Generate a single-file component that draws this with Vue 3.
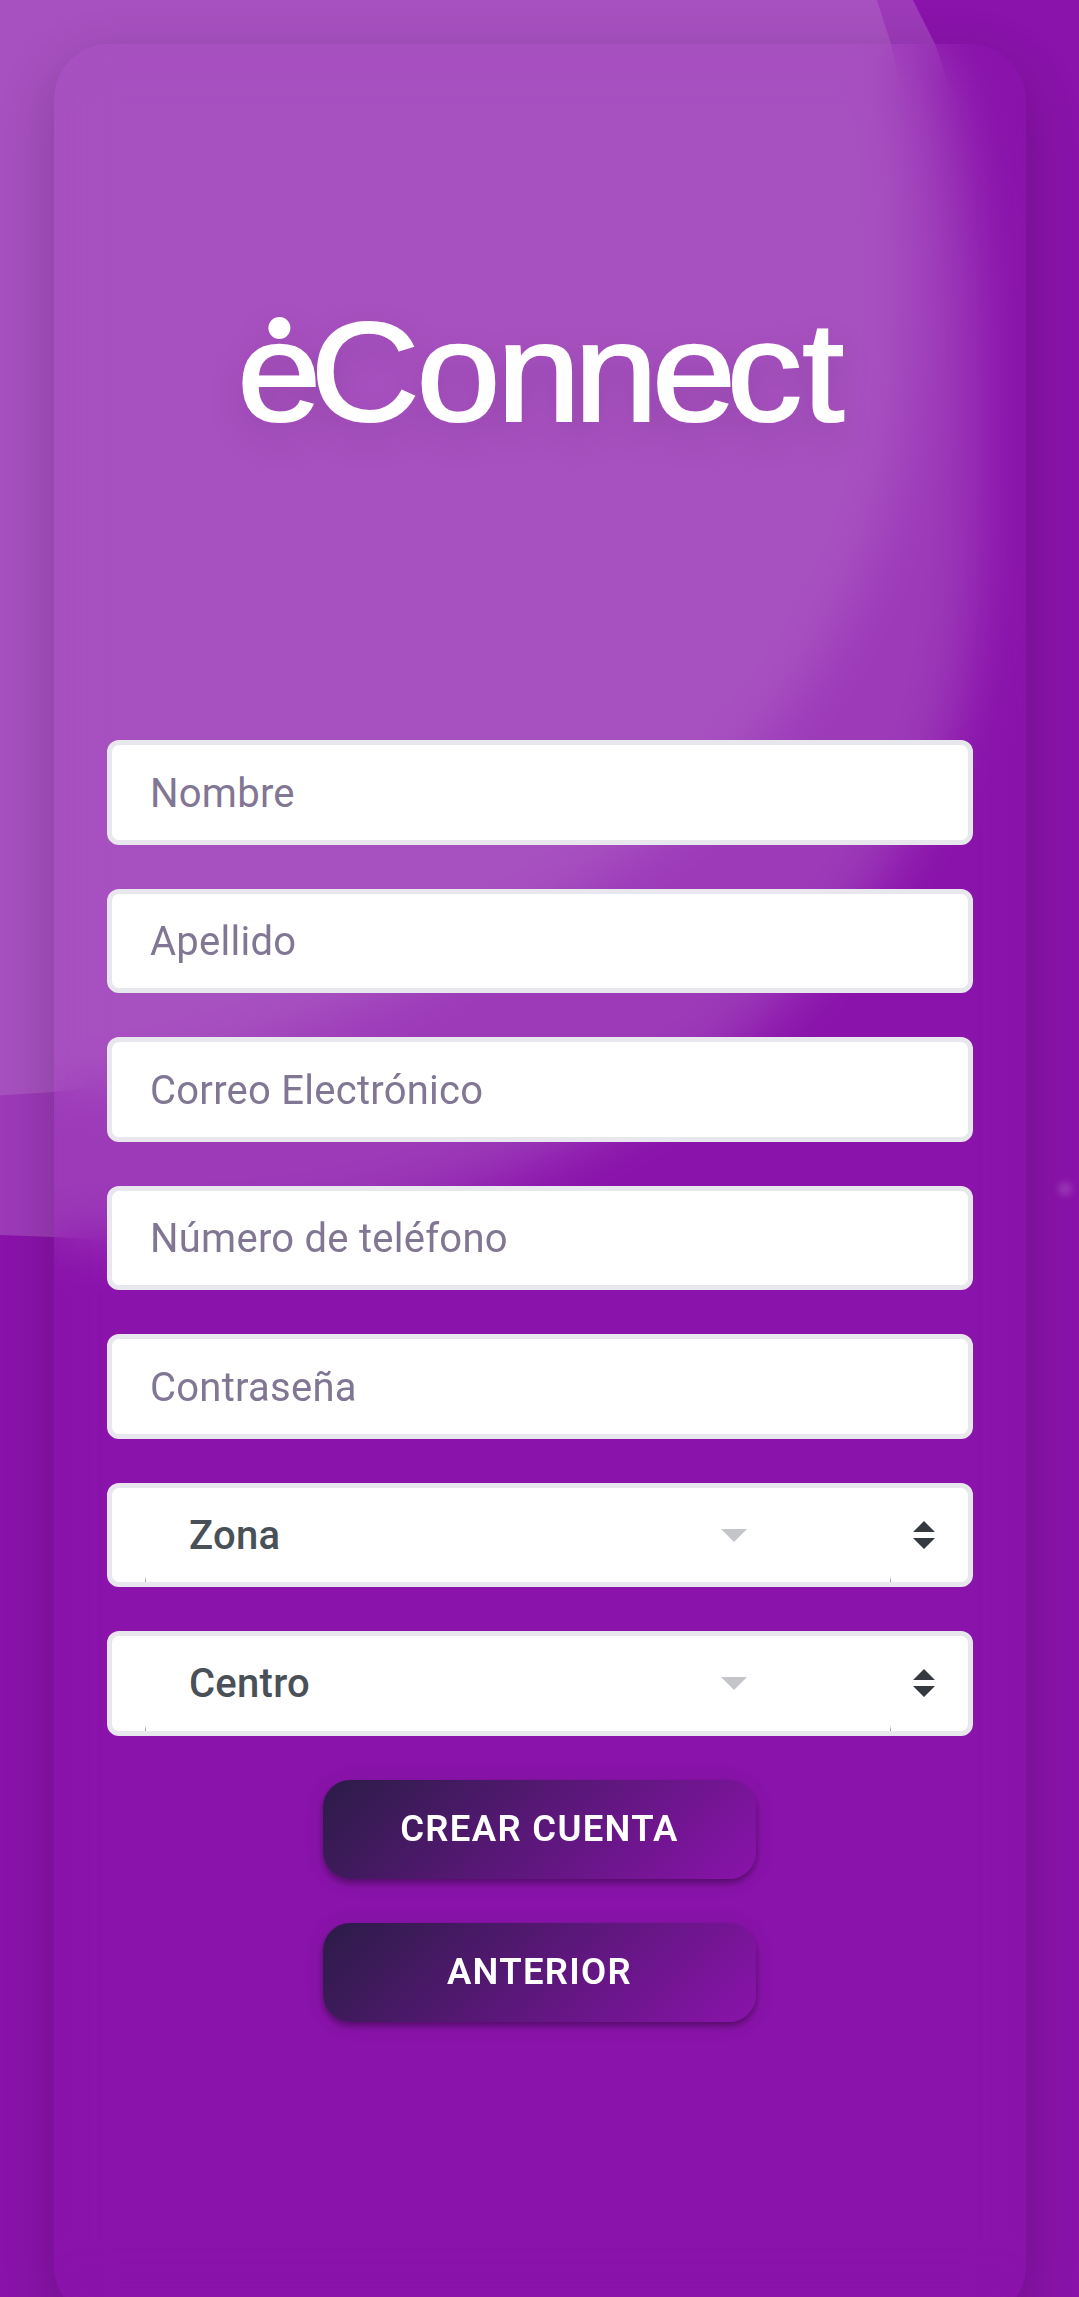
<template>
    <div class="page">
        <svg class="backdrop" viewBox="0 0 1079 2297" aria-hidden="true">
            <path class="blob-outer" d="M0 0 H913 L935 44 C965 125 979 240 979 380 C979 520 984 650 942 762 C895 880 790 1030 620 1123 C450 1213 270 1250 54 1237 L0 1235 Z" />
            <path class="blob-inner" d="M0 0 H877 L891 44 C916 150 922 315 903 450 C880 600 778 766 620 866 C450 980 250 1075 54 1092 L0 1095.5 Z" />
            <circle class="speck" cx="1065" cy="1189" r="7" />
        </svg>
        <main class="card">
            <header>
                <svg class="logo" viewBox="241 316 602 108" role="img" aria-label="eConnect">
                    <circle cx="278.4" cy="328" r="11" />
                    <text transform="scale(1.07 1)" x="220.9 289.3 388.4 463.3 535.4 608.4 678.3 748.9" y="421.3">eConnect</text>
                </svg>
            </header>
            <form @submit.prevent>
                <input v-for="field in fields" :key="field.name" v-model="form[field.name]" class="control" :type="field.type" :placeholder="field.label">
                <div v-for="item in selects" :key="item" class="control select">
                    <div class="select-inner">
                        <span>{{ item }}</span>
                        <svg class="caret" viewBox="0 0 26 13"><path d="M0 0H26L13 13Z" /></svg>
                    </div>
                    <svg class="sort" viewBox="0 0 22 28"><path d="M0 11L11 0L22 11ZM0 17H22L11 28Z" /></svg>
                </div>
                <button type="submit">Crear cuenta</button>
                <button type="button">Anterior</button>
            </form>
        </main>
    </div>
</template>

<script setup>
import { reactive } from 'vue'

const fields = [
    { name: 'nombre', label: 'Nombre', type: 'text' },
    { name: 'apellido', label: 'Apellido', type: 'text' },
    { name: 'correo', label: 'Correo Electrónico', type: 'email' },
    { name: 'telefono', label: 'Número de teléfono', type: 'tel' },
    { name: 'clave', label: 'Contraseña', type: 'password' }
]

const selects = ['Zona', 'Centro']

const form = reactive({
    nombre: '',
    apellido: '',
    correo: '',
    telefono: '',
    clave: ''
})
</script>

<style>
body {
    margin: 0;
    background-color: #8a13ab;
}
</style>

<style scoped>
.page {
    position: relative;
    box-sizing: border-box;
    height: 2297px;
    padding: 44px 53px 0 54px;
    overflow: hidden;
    background-color: #8a13ab;
    font-family: Roboto, "Liberation Sans", sans-serif;
}

.backdrop {
    position: absolute;
    top: 0;
    left: 0;
    width: 1079px;
    height: 2297px;
}

.blob-outer {
    fill: #9c3ab8;
}

.blob-inner {
    fill: #a750c0;
}

.speck {
    fill: #9a35b7;
    filter: blur(3px);
}

.card {
    position: relative;
    box-sizing: border-box;
    height: 2277px;
    padding: 272px 53px 0;
    border-radius: 55px;
    backdrop-filter: blur(27px);
    box-shadow: 0 20px 58px rgba(0, 0, 0, 0.2);
}

header {
    display: flex;
    justify-content: center;
    height: 424px;
}

.logo {
    width: 602px;
    height: 108px;
    margin-left: 5px;
    overflow: visible;
    fill: white;
    filter: drop-shadow(0 14px 17px rgba(0, 0, 0, 0.1));
}

.logo text {
    font-family: "Liberation Sans", Arial, sans-serif;
    font-size: 141px;
    stroke: white;
    stroke-width: 2.2px;
}

form {
    display: flex;
    flex-direction: column;
    align-items: center;
    gap: 44px;
}

.control {
    box-sizing: border-box;
    flex: none;
    width: 866px;
    height: 104.5px;
    padding: 2px 38px 0;
    border: 5px solid #e8e7ed;
    border-radius: 12px;
    outline: none;
    background-color: white;
    font-family: inherit;
    font-size: 40px;
    letter-spacing: 0.25px;
    color: #495057;
}

.control::placeholder {
    color: #817693;
    opacity: 1;
}

.select {
    display: flex;
    align-items: center;
    justify-content: space-between;
    padding: 0 33px;
    font-weight: 500;
}

/* inner box keeps the faded ends of its side borders */
.select-inner {
    display: flex;
    align-items: center;
    justify-content: space-between;
    box-sizing: border-box;
    width: 746px;
    height: 100%;
    padding: 1px 144px 0 44px;
    background:
        linear-gradient(transparent, #8b8f94) left bottom / 1px 6px no-repeat,
        linear-gradient(transparent, #8b8f94) right bottom / 1px 6px no-repeat;
}

.caret {
    width: 26px;
    height: 13px;
    fill: #c4c5c9;
}

.sort {
    width: 22px;
    height: 28px;
    fill: #343a40;
}

button {
    width: 433px;
    height: 99px;
    margin-right: 1px;
    padding: 0 0 2px;
    border: 0;
    border-radius: 27px;
    background: linear-gradient(135deg, #2b1c47, #8a13ab);
    box-shadow: 0 4px 7px rgba(0, 0, 0, 0.35), 0 2px 24px rgba(0, 0, 0, 0.07);
    color: white;
    font-family: inherit;
    font-size: 36.5px;
    font-weight: 600;
    letter-spacing: 1.3px;
    text-transform: uppercase;
}
</style>
